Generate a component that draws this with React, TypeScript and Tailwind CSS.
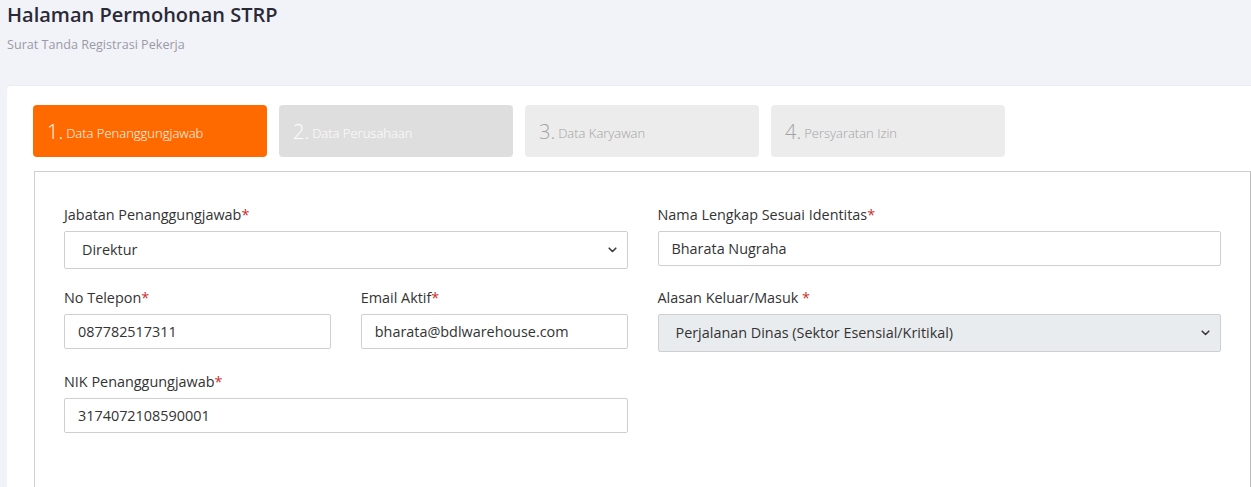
import React from "react";

const font = { fontFamily: '"Open Sans", "Noto Sans", sans-serif' };

function Chevron() {
  return (
    <svg width="9" height="6" viewBox="0 0 9 6" className="absolute right-[10px] top-1/2 -translate-y-1/2">
      <path d="M1.2 1.2 L4.5 4.5 L7.8 1.2" fill="none" stroke="#3a3a3a" strokeWidth="1.6" strokeLinecap="round" strokeLinejoin="round" />
    </svg>
  );
}

function Label({ text, space }: { text: string; space?: boolean }) {
  return (
    <div className="text-[14.4px] leading-[21px] text-[#333] mb-[6px]">
      {text}
      {space ? " " : ""}
      <span className="text-[#c9302c]">*</span>
    </div>
  );
}

function Input({ value }: { value: string }) {
  return (
    <div className="h-[35px] border border-[#cfcfcf] bg-white flex items-center pl-[13px] text-[14.4px] text-[#333] rounded-[2px]">
      {value}
    </div>
  );
}

function Select({ value, gray }: { value: string; gray?: boolean }) {
  return (
    <div
      className={`relative h-[38px] border border-[#cfcfcf] flex items-center pl-[17px] text-[14.4px] text-[#333] rounded-[2px] ${
        gray ? "bg-[#e9ecef]" : "bg-white"
      }`}
    >
      {value}
      <Chevron />
    </div>
  );
}

function Tab({ n, label, variant }: { n: string; label: string; variant: "active" | "mid" | "off" }) {
  const cls =
    variant === "active"
      ? "bg-[#ff6a00] text-white"
      : variant === "mid"
      ? "bg-[#dedede] text-white"
      : "bg-[#ececec] text-[#a3a3a3]";
  return (
    <div className={`w-[234px] h-[52px] rounded-[4px] flex items-center pl-[14px] pt-[2px] ${cls}`}>
      <span className="text-[20px] font-light leading-none">{n}.</span>
      <span className="text-[13px] font-light ml-[3px] mt-[3px]">{label}</span>
    </div>
  );
}

export default function App() {
  return (
    <div style={font} className="min-h-[487px] bg-[#f2f3f8] overflow-hidden">
      <div className="px-[7px] pt-[2px]">
        <h1 className="text-[20px] leading-[26px] font-semibold text-[#2a2a36]">Halaman Permohonan STRP</h1>
        <div className="text-[12.6px] leading-[16px] text-[#9a9aa6] mt-[9px]">Surat Tanda Registrasi Pekerja</div>
      </div>
      <div className="ml-[7px] mt-[32px] bg-white rounded-tl-[4px] pl-[26px] pt-[19px] min-h-[410px] border-t border-[#ececf2]">
        <div className="flex gap-[12px]">
          <Tab n="1" label="Data Penanggungjawab" variant="active" />
          <Tab n="2" label="Data Perusahaan" variant="mid" />
          <Tab n="3" label="Data Karyawan" variant="off" />
          <Tab n="4" label="Persyaratan Izin" variant="off" />
        </div>
        <div className="mt-[14px] ml-[1px] border border-[#cfcfcf] border-r-[#bdbdbd] min-h-[320px] pl-[29px] pr-[29px] pt-[32px]">
          <div className="grid grid-cols-2 gap-x-[30px] gap-y-[18px]">
            <div>
              <Label text="Jabatan Penanggungjawab" />
              <Select value="Direktur" />
            </div>
            <div>
              <Label text="Nama Lengkap Sesuai Identitas" />
              <Input value="Bharata Nugraha" />
            </div>
            <div className="grid grid-cols-2 gap-x-[30px]">
              <div>
                <Label text="No Telepon" />
                <Input value="087782517311" />
              </div>
              <div>
                <Label text="Email Aktif" />
                <Input value="bharata@bdlwarehouse.com" />
              </div>
            </div>
            <div>
              <Label text="Alasan Keluar/Masuk" space />
              <Select value="Perjalanan Dinas (Sektor Esensial/Kritikal)" gray />
            </div>
            <div className="pt-[1px]">
              <Label text="NIK Penanggungjawab" />
              <Input value="3174072108590001" />
            </div>
            <div />
          </div>
        </div>
      </div>
    </div>
  );
}
